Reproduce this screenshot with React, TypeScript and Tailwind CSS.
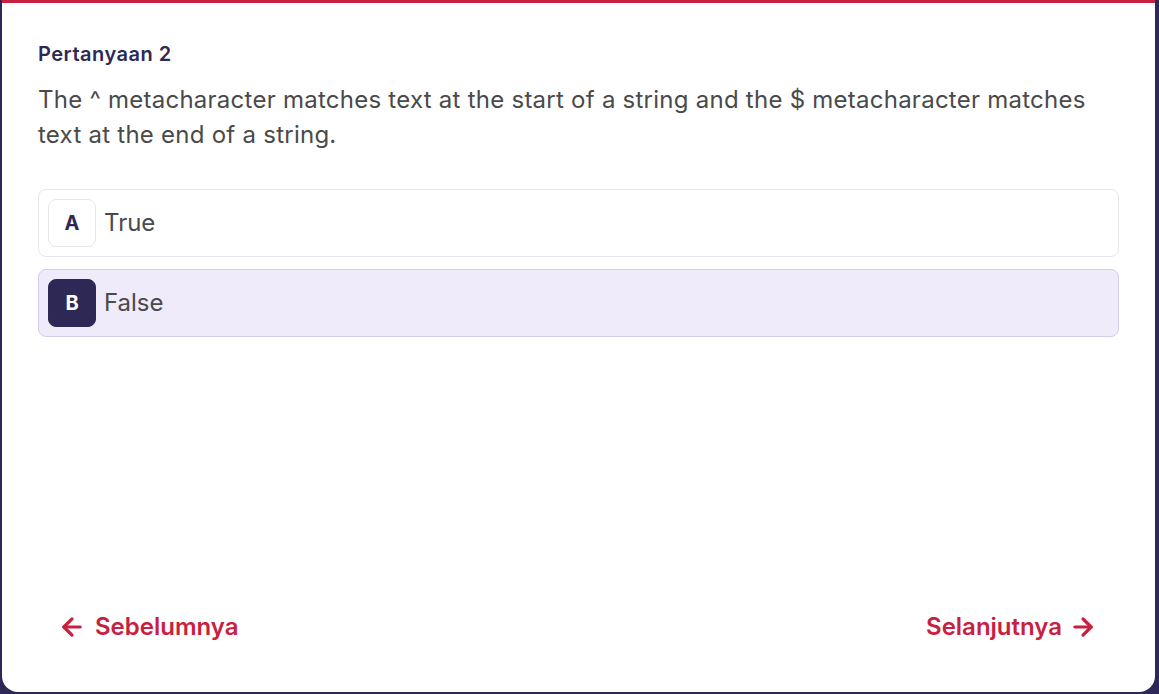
import React, { useState } from 'react';
import { ArrowLeft, ArrowRight } from 'lucide-react';

const options = [
  { key: 'A', label: 'True' },
  { key: 'B', label: 'False' },
];

const App: React.FC = () => {
  const [selected, setSelected] = useState('B');

  return (
    <div className="h-[694px] w-full bg-[#2e2856] pl-[2px] pr-[4px] pb-[2px] font-['Inter',sans-serif]">
      <div className="flex h-[692px] flex-col rounded-b-2xl border-t-[3px] border-[#c8203f] bg-white">
        <div className="px-9 pt-9">
          <h2 className="text-[20px] font-semibold leading-[30px] tracking-wide text-[#2e2856]">Pertanyaan 2</h2>
          <p className="mt-[13px] text-[24px] leading-[35px] tracking-[0.25px] text-[#4a4a4a]">
            The ^ metacharacter matches text at the start of a string and the $ metacharacter matches text at the
            end of a string.
          </p>

          <div className="mt-[37px] flex flex-col gap-3">
            {options.map((opt) => {
              const active = selected === opt.key;
              return (
                <button
                  key={opt.key}
                  onClick={() => setSelected(opt.key)}
                  className={`flex items-center gap-2 rounded-lg border p-[9px] text-left ${
                    active ? 'border-[#d5cdec] bg-[#efebfb]' : 'border-gray-200 bg-white'
                  }`}
                >
                  <span
                    className={`flex h-12 w-12 items-center justify-center rounded-lg border text-[20px] font-bold ${
                      active ? 'border-[#2e2856] bg-[#2e2856] text-white' : 'border-gray-200 bg-white text-[#2e2856]'
                    }`}
                  >
                    {opt.key}
                  </span>
                  <span className="text-[24px] text-[#4a4a4a]">{opt.label}</span>
                </button>
              );
            })}
          </div>
        </div>

        <div className="mt-auto flex items-center justify-between px-9 pb-[37px]">
          <button className="flex items-center gap-[9px] px-5 py-3 text-[24px] font-semibold leading-8 text-[#c8203f]">
            <ArrowLeft size={28} strokeWidth={2.75} />
            Sebelumnya
          </button>
          <button className="flex items-center gap-[7px] pl-5 pr-[22px] py-3 text-[24px] font-semibold leading-8 text-[#c8203f]">
            Selanjutnya
            <ArrowRight size={28} strokeWidth={2.75} />
          </button>
        </div>
      </div>
    </div>
  );
};

export default App;
